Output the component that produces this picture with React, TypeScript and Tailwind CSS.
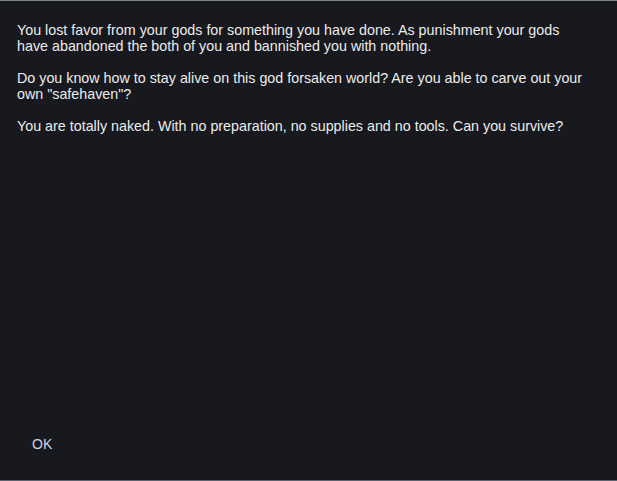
const PARAGRAPHS = [
  "You lost favor from your gods for something you have done. As punishment your gods have abandoned the both of you and bannished you with nothing.",
  'Do you know how to stay alive on this god forsaken world? Are you able to carve out your own "safehaven"?',
  "You are totally naked. With no preparation, no supplies and no tools. Can you survive?",
];

export default function App() {
  return (
    <div
      className="flex h-[481px] w-[617px] flex-col border-t border-b border-t-[#7c7f85] border-b-[#5c6472] bg-[#17191e]"
      style={{ fontFamily: '"Liberation Sans", Arial, sans-serif' }}
    >
      {/* Intro text */}
      <div className="flex flex-1 flex-col gap-4 pl-[17px] pr-[28px] pt-[21px] text-[14.3px] leading-4 text-[#ececec]">
        {PARAGRAPHS.map((p, i) => (
          <p key={i}>{p}</p>
        ))}
      </div>

      {/* Footer */}
      <div className="px-[32px] pb-[24px]">
        <button className="text-[14px] leading-4 text-[#d0d4e2]">OK</button>
      </div>
    </div>
  );
}
